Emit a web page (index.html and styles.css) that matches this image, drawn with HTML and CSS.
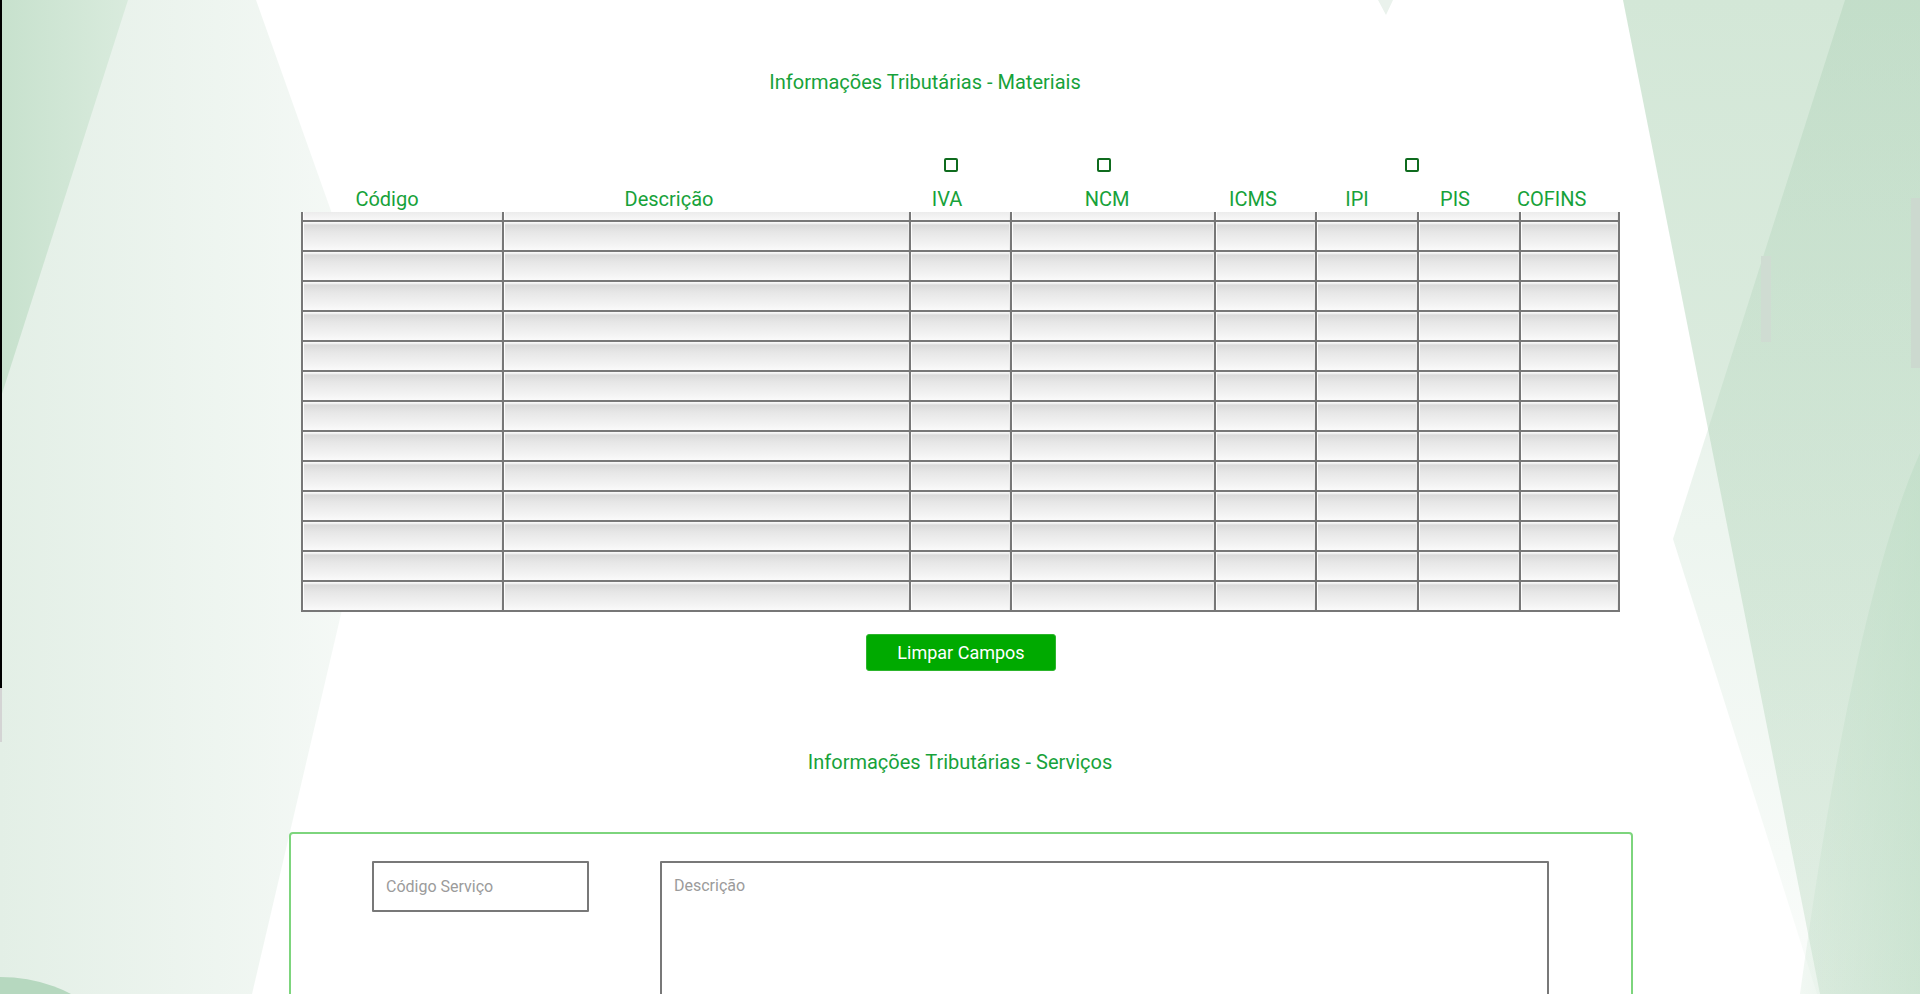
FILE: index.html
```html
<!DOCTYPE html>
<html lang="pt-BR">
<head>
<meta charset="utf-8">
<title>Informações Tributárias</title>
<link rel="stylesheet" href="styles.css">
</head>
<body>
<div class="page">
  <svg class="bg" width="1920" height="994" viewBox="0 0 1920 994" aria-hidden="true">
    <defs>
      <linearGradient id="lg1" x1="0" y1="0" x2="1" y2="0">
        <stop offset="0" stop-color="#e3efe6"/>
        <stop offset="1" stop-color="#f7faf8"/>
      </linearGradient>
      <linearGradient id="lg2" x1="0" y1="0" x2="1" y2="0">
        <stop offset="0" stop-color="#c7e1cd"/>
        <stop offset="1" stop-color="#d9ebdd"/>
      </linearGradient>
      <linearGradient id="rg1" x1="0" y1="0" x2="0" y2="1">
        <stop offset="0" stop-color="#d3e7d7"/>
        <stop offset="1" stop-color="#e6f1e8"/>
      </linearGradient>
      <linearGradient id="rg2" x1="0" y1="0" x2="0" y2="1">
        <stop offset="0" stop-color="#a9cfb3" stop-opacity="0.38"/>
        <stop offset="1" stop-color="#a9cfb3" stop-opacity="0.06"/>
      </linearGradient>
      <linearGradient id="rg3" x1="0" y1="0" x2="1" y2="0">
        <stop offset="0" stop-color="#bcdcc4" stop-opacity="0.2"/>
        <stop offset="1" stop-color="#bcdcc4" stop-opacity="0.55"/>
      </linearGradient>
    </defs>
    <polygon points="0,0 256,0 394,388 252,994 0,994" fill="url(#lg1)"/>
    <polygon points="0,0 128,0 0,400" fill="url(#lg2)"/>
    <ellipse cx="0" cy="1100" rx="140" ry="123" fill="#b6d8bf"/>
    <rect x="0" y="0" width="2" height="688" fill="#000"/>
    <rect x="0" y="688" width="2" height="54" fill="#d4d4d4"/>
    <polygon points="1378,0 1393,0 1386,15" fill="#eaf2ec"/>
    <polygon points="1623,0 1920,0 1920,994 1820,994" fill="url(#rg1)"/>
    <polygon points="1845,0 1920,0 1920,994 1817,994 1673,539" fill="url(#rg2)"/>
    <path d="M1920,453 C1872,560 1832,760 1800,994 L1920,994 Z" fill="url(#rg3)"/>
    <rect x="1761" y="256" width="10" height="86" fill="#cfdcd2"/>
    <rect x="1911" y="198" width="9" height="170" fill="#ccd9cf"/>
  </svg>

  <main class="content">
    <h2 class="title title-materiais">Informações Tributárias - Materiais</h2>

    <section class="materiais">
      <div class="checks">
        <input type="checkbox" class="cb cb-iva" aria-label="IVA">
        <input type="checkbox" class="cb cb-ncm" aria-label="NCM">
        <input type="checkbox" class="cb cb-ipi" aria-label="IPI">
      </div>
      <div class="head">
        <span>Código</span><span>Descrição</span><span>IVA</span><span>NCM</span><span>ICMS</span><span>IPI</span><span>PIS</span><span>COFINS</span>
      </div>
      <div class="grid">
        <div class="row row-partial"><div class="c"></div><div class="c"></div><div class="c"></div><div class="c"></div><div class="c"></div><div class="c"></div><div class="c"></div><div class="c"></div></div>
        <div class="row"><div class="c"></div><div class="c"></div><div class="c"></div><div class="c"></div><div class="c"></div><div class="c"></div><div class="c"></div><div class="c"></div></div>
        <div class="row"><div class="c"></div><div class="c"></div><div class="c"></div><div class="c"></div><div class="c"></div><div class="c"></div><div class="c"></div><div class="c"></div></div>
        <div class="row"><div class="c"></div><div class="c"></div><div class="c"></div><div class="c"></div><div class="c"></div><div class="c"></div><div class="c"></div><div class="c"></div></div>
        <div class="row"><div class="c"></div><div class="c"></div><div class="c"></div><div class="c"></div><div class="c"></div><div class="c"></div><div class="c"></div><div class="c"></div></div>
        <div class="row"><div class="c"></div><div class="c"></div><div class="c"></div><div class="c"></div><div class="c"></div><div class="c"></div><div class="c"></div><div class="c"></div></div>
        <div class="row"><div class="c"></div><div class="c"></div><div class="c"></div><div class="c"></div><div class="c"></div><div class="c"></div><div class="c"></div><div class="c"></div></div>
        <div class="row"><div class="c"></div><div class="c"></div><div class="c"></div><div class="c"></div><div class="c"></div><div class="c"></div><div class="c"></div><div class="c"></div></div>
        <div class="row"><div class="c"></div><div class="c"></div><div class="c"></div><div class="c"></div><div class="c"></div><div class="c"></div><div class="c"></div><div class="c"></div></div>
        <div class="row"><div class="c"></div><div class="c"></div><div class="c"></div><div class="c"></div><div class="c"></div><div class="c"></div><div class="c"></div><div class="c"></div></div>
        <div class="row"><div class="c"></div><div class="c"></div><div class="c"></div><div class="c"></div><div class="c"></div><div class="c"></div><div class="c"></div><div class="c"></div></div>
        <div class="row"><div class="c"></div><div class="c"></div><div class="c"></div><div class="c"></div><div class="c"></div><div class="c"></div><div class="c"></div><div class="c"></div></div>
        <div class="row"><div class="c"></div><div class="c"></div><div class="c"></div><div class="c"></div><div class="c"></div><div class="c"></div><div class="c"></div><div class="c"></div></div>
        <div class="row"><div class="c"></div><div class="c"></div><div class="c"></div><div class="c"></div><div class="c"></div><div class="c"></div><div class="c"></div><div class="c"></div></div>
      </div>
    </section>

    <div class="actions">
      <button type="button" class="btn">Limpar Campos</button>
    </div>

    <h2 class="title title-servicos">Informações Tributárias - Serviços</h2>

    <section class="servicos">
      <input type="text" class="field field-code" placeholder="Código Serviço">
      <textarea class="field field-desc" placeholder="Descrição"></textarea>
    </section>
  </main>
</div>
</body>
</html>
```

FILE: styles.css
```css
html, body {
  margin: 0;
  padding: 0;
}

body {
  font-family: Roboto, "Liberation Sans", Arial, sans-serif;
  background: #ffffff;
}

.page {
  position: relative;
  width: 1920px;
  height: 994px;
  overflow: hidden;
}

.bg {
  position: absolute;
  left: 0;
  top: 0;
  z-index: 0;
  display: block;
}

.content {
  position: relative;
  z-index: 1;
}

.title {
  margin: 0;
  font-size: 20px;
  line-height: 24px;
  font-weight: 400;
  color: #17a23a;
  text-align: center;
}

.title-materiais {
  margin-top: 70px;
  padding-right: 70px;
}

.materiais {
  margin-left: 301px;
  width: 1319px;
}

.checks {
  display: flex;
  margin-top: 64px;
  height: 14px;
}

.cb {
  appearance: none;
  -webkit-appearance: none;
  margin: 0;
  width: 14px;
  height: 14px;
  box-sizing: border-box;
  border: 2px solid #0f6b1e;
  border-radius: 2px;
  background: #ffffff;
}

.cb-iva { margin-left: 643px; }
.cb-ncm { margin-left: 139px; }
.cb-ipi { margin-left: 294px; }

.head {
  display: grid;
  grid-template-columns: 172px 392px 164px 156px 136px 72px 124px 68px;
  margin-top: 14px;
  height: 26px;
  font-size: 20px;
  line-height: 26px;
  color: #17a23a;
  text-align: center;
  white-space: nowrap;
}

.grid {
  border-left: 2px solid #777777;
}

.row {
  display: grid;
  grid-template-columns: 201px 407px 101px 204px 101px 102px 102px 99px;
  height: 30px;
}

.row-partial {
  height: 10px;
}

.c {
  box-sizing: border-box;
  border-right: 2px solid #777777;
  border-bottom: 2px solid #777777;
  background: linear-gradient(to bottom, #f8f8f8 0, #f8f8f8 1px, #d9d9d9 3px, #e6e6e6 35%, #f3f3f3 80%, #fafafa 100%);
  box-shadow: inset 1px 0 0 #fdfdfd, inset -1px 0 0 #ececec;
}

.row-partial .c {
  background: linear-gradient(to bottom, #ececec, #f8f8f8);
}

.actions {
  display: flex;
  justify-content: center;
  padding-left: 2px;
  margin-top: 22px;
}

.btn {
  width: 190px;
  height: 37px;
  padding: 0;
  border: 1px solid #2db52d;
  border-radius: 3px;
  background: #00aa00;
  color: #ffffff;
  font-family: Roboto, "Liberation Sans", Arial, sans-serif;
  font-size: 18px;
  font-weight: 400;
  line-height: 35px;
  cursor: pointer;
}

.title-servicos {
  margin-top: 79px;
}

.servicos {
  margin: 58px 0 0 289px;
  width: 1344px;
  box-sizing: border-box;
  border: 2px solid #7dd57d;
  border-radius: 4px;
  padding: 27px 82px 30px 81px;
  display: flex;
  gap: 71px;
  align-items: flex-start;
}

.field {
  box-sizing: border-box;
  border: 2px solid #787878;
  border-radius: 1px;
  background: #ffffff;
  color: #333333;
  font-family: Roboto, "Liberation Sans", Arial, sans-serif;
  font-size: 16px;
  padding: 0 12px;
  margin: 0;
  outline: none;
}

.field::placeholder {
  color: #9b9b9b;
}

.field-code {
  width: 217px;
  height: 51px;
}

.field-desc {
  width: 889px;
  height: 170px;
  padding-top: 13px;
  line-height: 19px;
  resize: none;
}
```
